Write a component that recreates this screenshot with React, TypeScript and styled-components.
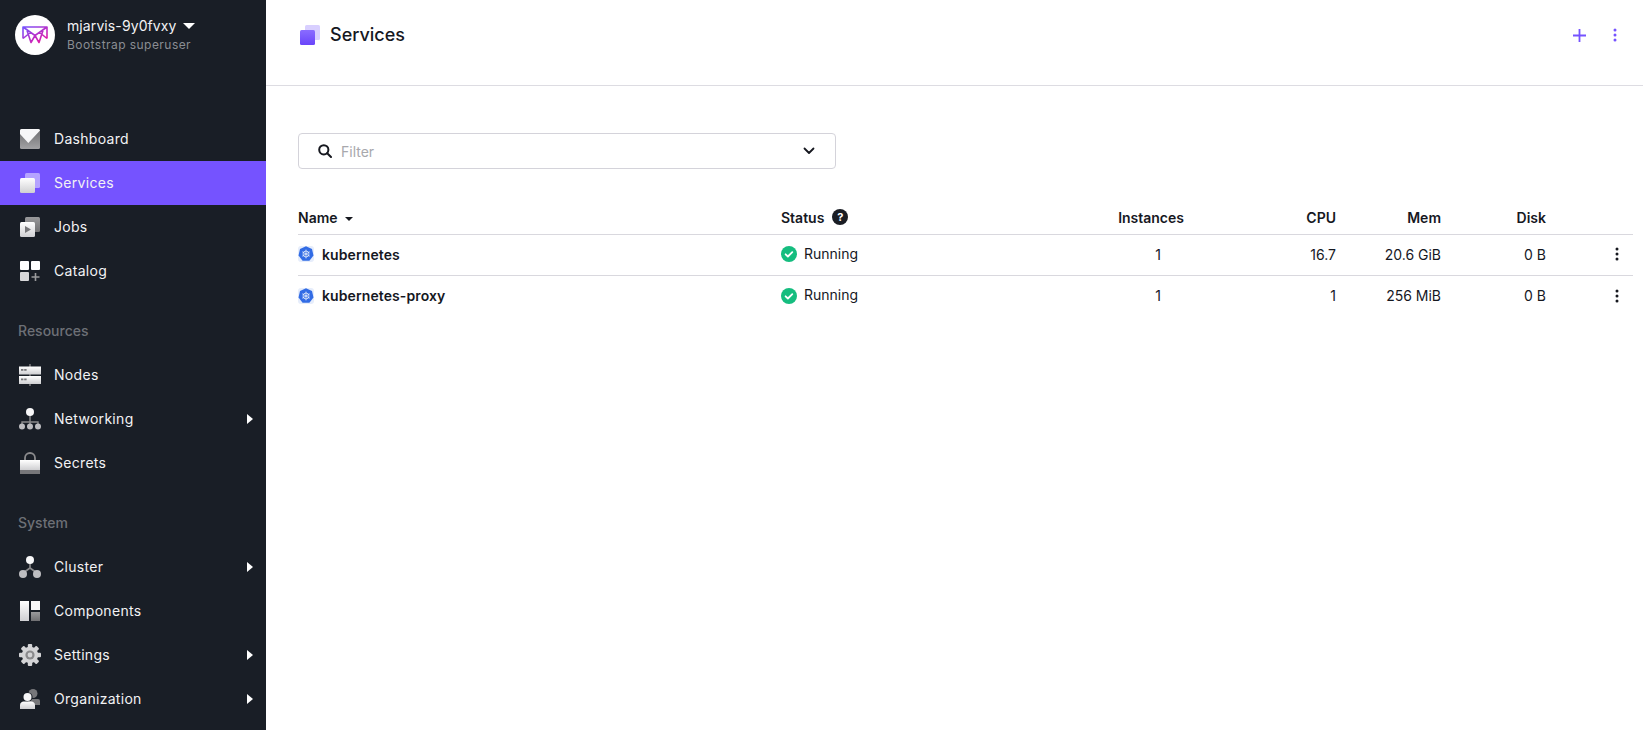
import { ReactNode } from "react";
import styled, { createGlobalStyle } from "styled-components";

const GlobalStyle = createGlobalStyle`
  html, body {
    margin: 0;
    height: 100%;
    background: #fff;
    font-family: Inter, "Liberation Sans", sans-serif;
    color: #16181f;
  }
  * { box-sizing: border-box; }
`;

const Page = styled.div`
  display: flex;
  height: 730px;
  overflow: hidden;
`;

const Sidebar = styled.aside`
  width: 266px;
  flex: none;
  background: #191e26;
  color: #f2f2f4;
`;

const Account = styled.div`
  display: flex;
  gap: 12px;
  padding: 15px 15px 0;
  height: 117px;
  align-items: flex-start;
`;

const Avatar = styled.div`
  width: 40px;
  height: 40px;
  border-radius: 50%;
  background: #fff;
  display: flex;
  align-items: center;
  justify-content: center;
`;

const AccountText = styled.div`
  padding-top: 2px;
`;

const AccountName = styled.div`
  display: flex;
  align-items: center;
  gap: 6px;
  font-size: 14px;
  line-height: 18px;
  letter-spacing: 0.1px;
`;

const AccountRole = styled.div`
  margin-top: 1px;
  font-size: 12px;
  line-height: 18px;
  letter-spacing: 0.45px;
  color: #8a8d93;
`;

const Caret = styled.span<{ $color?: string; $size?: number }>`
  display: inline-block;
  width: 0;
  height: 0;
  border-left: ${(p) => p.$size ?? 6}px solid transparent;
  border-right: ${(p) => p.$size ?? 6}px solid transparent;
  border-top: ${(p) => p.$size ?? 6}px solid ${(p) => p.$color ?? "#fff"};
`;

const NameCaret = styled(Caret)`
  margin-top: 3px;
`;

const NavGroup = styled.nav`
  margin-bottom: 16px;
`;

const NavTitle = styled.div`
  height: 44px;
  padding: 0 18px 2px;
  display: flex;
  align-items: center;
  font-size: 14px;
  font-weight: 500;
  color: #6d7076;
`;

const NavItem = styled.div<{ $active?: boolean }>`
  display: flex;
  align-items: center;
  height: 44px;
  padding: 0 11px 0 19px;
  font-size: 14px;
  letter-spacing: 0.3px;
  background: ${(p) => (p.$active ? "#7553ff" : "transparent")};
`;

const NavIcon = styled.span`
  width: 22px;
  height: 22px;
  margin-right: 13px;
  display: flex;
  align-items: center;
  justify-content: center;
`;

const NavLabel = styled.span`
  flex: 1;
  margin-top: -2px;
`;

const ChevronRight = styled.span`
  width: 0;
  height: 0;
  margin-right: 2px;
  border-top: 5px solid transparent;
  border-bottom: 5px solid transparent;
  border-left: 6px solid #fff;
`;

const Main = styled.main`
  flex: 1;
  min-width: 0;
`;

const TopBar = styled.header`
  height: 86px;
  border-bottom: 1px solid #dddce2;
  display: flex;
  align-items: flex-start;
  padding: 25px 26px 0 34px;
`;

const PageTitle = styled.h1`
  flex: 1;
  display: flex;
  align-items: center;
  gap: 10px;
  margin: 0;
  font-size: 18px;
  line-height: 20px;
  font-weight: 500;
  color: #16181f;
`;

const TopActions = styled.div`
  display: flex;
  align-items: center;
  gap: 27px;
  margin-top: 3px;
`;

const Content = styled.div`
  padding: 47px 10px 0 32px;
`;

const Filter = styled.div`
  width: 538px;
  height: 36px;
  border: 1px solid #d4d3da;
  border-radius: 4px;
  display: flex;
  align-items: center;
  padding: 0 20px 0 19px;
  font-size: 14px;
  color: #a8a8ad;
  gap: 9px;
`;

const FilterText = styled.span`
  flex: 1;
`;

const Table = styled.div`
  margin-top: 38px;
`;

const columns = "483px 270px 133px 152px 105px 105px 1fr";

const HeadRow = styled.div`
  display: grid;
  grid-template-columns: ${columns};
  align-items: center;
  border-bottom: 1px solid #d9d8de;
  padding-bottom: 7px;
  height: 28px;
  font-size: 14px;
  font-weight: 600;
  color: #16181f;
`;

const Row = styled.div`
  display: grid;
  grid-template-columns: ${columns};
  height: 41px;
  padding-bottom: 2px;
  align-items: center;
  border-bottom: 1px solid #d9d8de;
  font-size: 14px;
  color: #16181f;

  &:last-child {
    border-bottom: none;
  }
`;

const Cell = styled.div<{ $right?: boolean; $pad?: number }>`
  display: flex;
  align-items: center;
  justify-content: ${(p) => (p.$right ? "flex-end" : "flex-start")};
  padding-right: ${(p) => p.$pad ?? 0}px;
`;

const HeadCell = styled(Cell)`
  gap: 7px;
`;

const NameCell = styled(Cell)`
  gap: 8px;
  font-weight: 600;
  letter-spacing: 0.1px;
`;

const StatusCell = styled(Cell)`
  gap: 7px;
`;

const StatusText = styled.span`
  margin-top: -2px;
`;

const Help = styled.span`
  width: 16px;
  height: 16px;
  margin-left: 1px;
  border-radius: 50%;
  background: #1a1d24;
  color: #fff;
  font-size: 11px;
  font-weight: 700;
  display: flex;
  align-items: center;
  justify-content: center;
`;

const DotsCell = styled(Cell)`
  justify-content: flex-end;
  padding-right: 14px;
`;

const Dots = ({ color }: { color: string }) => (
  <svg width="4" height="14" viewBox="0 0 4 14" fill={color}>
    <circle cx="2" cy="2" r="1.5" />
    <circle cx="2" cy="7" r="1.5" />
    <circle cx="2" cy="12" r="1.5" />
  </svg>
);

const Gradients = () => (
  <svg width="0" height="0" style={{ position: "absolute" }}>
    <defs>
      <linearGradient id="fade" x1="0" y1="0" x2="0" y2="1">
        <stop offset="0" stopColor="#ffffff" />
        <stop offset="1" stopColor="#cfcfd2" />
      </linearGradient>
      <linearGradient id="grey" x1="0" y1="0" x2="0" y2="1">
        <stop offset="0" stopColor="#9a9a9c" />
        <stop offset="1" stopColor="#707072" />
      </linearGradient>
      <linearGradient id="greyUp" x1="0" y1="0" x2="0" y2="1">
        <stop offset="0" stopColor="#6c6c6e" />
        <stop offset="1" stopColor="#a2a2a4" />
      </linearGradient>
      <linearGradient id="logo" x1="0" y1="0" x2="1" y2="1">
        <stop offset="0" stopColor="#7553ff" />
        <stop offset="1" stopColor="#f0129b" />
      </linearGradient>
      <linearGradient id="purple" x1="0" y1="0" x2="0" y2="1">
        <stop offset="0" stopColor="#8a6cff" />
        <stop offset="1" stopColor="#6a45fa" />
      </linearGradient>
    </defs>
  </svg>
);

const Logo = () => (
  <svg width="26" height="18" viewBox="0 0 26 18" fill="none" stroke="url(#logo)" strokeWidth="1.6" strokeLinejoin="round">
    <path d="M1 12.500V1h24v11.500M1 1l12 8.500L25 1M1 12.500L9 6M25 12.500L17 6M4.500 3L9 16.500 13 9.500l4 7L21.500 3" />
  </svg>
);

const DashboardIcon = () => (
  <svg width="20" height="20" viewBox="0 0 20 20">
    <rect width="20" height="20" rx="1.5" fill="url(#greyUp)" />
    <path d="M1.500 0h17A1.500 1.500 0 0 1 20 1.500L8.300 14 0 5V1.500A1.500 1.500 0 0 1 1.500 0z" fill="#f7f7f8" />
  </svg>
);

const StackIcon = ({ front, back }: { front: string; back: string }) => (
  <svg width="20" height="20" viewBox="0 0 20 20">
    <rect x="5" width="15" height="15" rx="1.5" fill={back} />
    <rect y="5" width="15" height="15" rx="1.5" fill={front} />
  </svg>
);

const JobsIcon = () => (
  <svg width="20" height="20" viewBox="0 0 20 20">
    <rect x="5" width="15" height="15" rx="1.5" fill="url(#grey)" />
    <rect y="5" width="15" height="15" rx="1.5" fill="url(#fade)" />
    <path d="M5 9l6 3.500L5 16z" fill="#77777a" />
  </svg>
);

const CatalogIcon = () => (
  <svg width="20" height="20" viewBox="0 0 20 20">
    <rect width="9" height="9" rx="1" fill="#fff" />
    <rect x="11" width="9" height="9" rx="1" fill="#fff" />
    <rect y="11" width="9" height="9" rx="1" fill="#d8d8da" />
    <path d="M15.500 12v8M11.500 16h8" stroke="#9a9a9c" strokeWidth="1.6" />
  </svg>
);

const NodesIcon = () => (
  <svg width="22" height="22" viewBox="0 0 22 22">
    <path d="M11 0v22" stroke="#77777a" strokeWidth="1.6" />
    <rect y="2.500" width="22" height="8" fill="url(#fade)" />
    <rect y="12" width="22" height="8" fill="url(#fade)" />
    <rect x="2" y="5" width="2.400" height="1.800" fill="#77777a" />
    <rect x="5.200" y="5" width="2.400" height="1.800" fill="#77777a" />
    <rect x="2" y="14.500" width="2.400" height="1.800" fill="#77777a" />
    <rect x="5.200" y="14.500" width="2.400" height="1.800" fill="#77777a" />
  </svg>
);

const NetworkIcon = () => (
  <svg width="22" height="22" viewBox="0 0 22 22">
    <path d="M11 7v12M3 19v-5h16v5" fill="none" stroke="#8a8a8c" strokeWidth="1.4" />
    <circle cx="11" cy="4" r="4" fill="#f7f7f8" />
    <circle cx="3" cy="18.500" r="3" fill="#bdbdc0" />
    <circle cx="11" cy="18.500" r="3" fill="#bdbdc0" />
    <circle cx="19" cy="18.500" r="3" fill="#bdbdc0" />
  </svg>
);

const SecretsIcon = () => (
  <svg width="20" height="22" viewBox="0 0 20 22">
    <path d="M5 9V6a5 5 0 0 1 10 0v3" fill="none" stroke="#8a8a8c" strokeWidth="1.8" />
    <rect y="8" width="20" height="10" fill="url(#fade)" />
    <rect y="18" width="20" height="4" fill="#77777a" />
  </svg>
);

const ClusterIcon = () => (
  <svg width="22" height="22" viewBox="0 0 22 22">
    <path d="M11 5v7M11 12l-7 5M11 12l7 5" stroke="#8a8a8c" strokeWidth="1.6" />
    <circle cx="11" cy="4" r="4" fill="#f7f7f8" />
    <circle cx="4" cy="18" r="4" fill="#bdbdc0" />
    <circle cx="18" cy="18" r="4" fill="#bdbdc0" />
  </svg>
);

const ComponentsIcon = () => (
  <svg width="20" height="20" viewBox="0 0 20 20">
    <rect width="9" height="20" fill="url(#fade)" />
    <rect x="11" width="9" height="9" fill="#f7f7f8" />
    <rect x="11" y="11" width="9" height="9" fill="url(#grey)" />
  </svg>
);

const SettingsIcon = () => (
  <svg width="22" height="22" viewBox="0 0 22 22">
    <g fill="#d4d4d6">
      <circle cx="11" cy="11" r="8.200" />
      {[0, 45, 90, 135, 180, 225, 270, 315].map((a) => (
        <rect key={a} x="8.800" y="0" width="4.400" height="5" rx="1" transform={`rotate(${a} 11 11)`} />
      ))}
    </g>
    <circle cx="11" cy="11" r="4.600" fill="#8a8a8c" />
    <circle cx="11" cy="11" r="2.400" fill="#d4d4d6" />
  </svg>
);

const OrganizationIcon = () => (
  <svg width="20" height="20" viewBox="0 0 20 20">
    <circle cx="13" cy="4.500" r="4.500" fill="#77777a" />
    <path d="M8 10h10a2 2 0 0 1 2 2v4H8z" fill="#77777a" />
    <circle cx="8" cy="8" r="4.600" fill="#191e26" />
    <circle cx="7.500" cy="8" r="4" fill="#f7f7f8" />
    <path d="M0 20v-4c0-2 2-3.500 3.500-3.500h8C13 12.500 15 14 15 16v4z" fill="url(#fade)" />
  </svg>
);

const SearchIcon = () => (
  <svg width="14" height="14" viewBox="0 0 14 14" fill="none" stroke="#16181f" strokeWidth="2">
    <circle cx="5.800" cy="5.800" r="4.600" />
    <path d="M9.200 9.200L13 13" strokeLinecap="round" />
  </svg>
);

const ChevronDown = () => (
  <svg width="12" height="8" viewBox="0 0 12 8" fill="none" stroke="#16181f" strokeWidth="1.800">
    <path d="M1.500 1.500L6 6l4.500-4.500" strokeLinecap="round" strokeLinejoin="round" />
  </svg>
);

const PlusIcon = () => (
  <svg width="13" height="13" viewBox="0 0 13 13" stroke="#7553ff" strokeWidth="1.800">
    <path d="M6.500 0v13M0 6.500h13" />
  </svg>
);

const KubeIcon = () => (
  <svg width="16" height="16" viewBox="0 0 16 16">
    <rect width="16" height="16" rx="3" fill="#e6edfb" />
    <path d="M8 .2l6 2.900 1.500 6.500-4.100 5.200H4.600L.5 9.600 2 3.100z" fill="#326ce5" />
    <g stroke="#e6edfb" strokeWidth="0.8" fill="none">
      <circle cx="8" cy="8" r="3" />
      <path d="M8 3.600v8.800M4.200 5.800l7.600 4.400M11.800 5.800l-7.600 4.400" />
    </g>
  </svg>
);

const CheckIcon = () => (
  <svg width="16" height="16" viewBox="0 0 16 16">
    <circle cx="8" cy="8" r="8" fill="#15bd7f" />
    <path d="M4.600 8.300l2.300 2.200 4.400-4.400" fill="none" stroke="#fff" strokeWidth="1.800" strokeLinecap="round" strokeLinejoin="round" />
  </svg>
);

type NavEntry = { label: string; icon: ReactNode; active?: boolean; more?: boolean };

const groups: { title?: string; items: NavEntry[] }[] = [
  {
    items: [
      { label: "Dashboard", icon: <DashboardIcon /> },
      { label: "Services", icon: <StackIcon front="url(#fade)" back="#b5a3ff" />, active: true },
      { label: "Jobs", icon: <JobsIcon /> },
      { label: "Catalog", icon: <CatalogIcon /> },
    ],
  },
  {
    title: "Resources",
    items: [
      { label: "Nodes", icon: <NodesIcon /> },
      { label: "Networking", icon: <NetworkIcon />, more: true },
      { label: "Secrets", icon: <SecretsIcon /> },
    ],
  },
  {
    title: "System",
    items: [
      { label: "Cluster", icon: <ClusterIcon />, more: true },
      { label: "Components", icon: <ComponentsIcon /> },
      { label: "Settings", icon: <SettingsIcon />, more: true },
      { label: "Organization", icon: <OrganizationIcon />, more: true },
    ],
  },
];

const services = [
  { name: "kubernetes", cpu: "16.7", mem: "20.6 GiB" },
  { name: "kubernetes-proxy", cpu: "1", mem: "256 MiB" },
];

export default function App() {
  return (
    <Page>
      <GlobalStyle />
      <Gradients />
      <Sidebar>
        <Account>
          <Avatar>
            <Logo />
          </Avatar>
          <AccountText>
            <AccountName>
              mjarvis-9y0fvxy <Caret />
            </AccountName>
            <AccountRole>Bootstrap superuser</AccountRole>
          </AccountText>
        </Account>
        {groups.map((group) => (
          <NavGroup key={group.title ?? "main"}>
            {group.title && <NavTitle>{group.title}</NavTitle>}
            {group.items.map((item) => (
              <NavItem key={item.label} $active={item.active}>
                <NavIcon>{item.icon}</NavIcon>
                <NavLabel>{item.label}</NavLabel>
                {item.more && <ChevronRight />}
              </NavItem>
            ))}
          </NavGroup>
        ))}
      </Sidebar>
      <Main>
        <TopBar>
          <PageTitle>
            <StackIcon front="url(#purple)" back="#d8cfff" />
            Services
          </PageTitle>
          <TopActions>
            <PlusIcon />
            <Dots color="#7553ff" />
          </TopActions>
        </TopBar>
        <Content>
          <Filter>
            <SearchIcon />
            <FilterText>Filter</FilterText>
            <ChevronDown />
          </Filter>
          <Table>
            <HeadRow>
              <HeadCell>
                Name <NameCaret $color="#16181f" $size={4} />
              </HeadCell>
              <HeadCell>
                Status <Help>?</Help>
              </HeadCell>
              <HeadCell $right>Instances</HeadCell>
              <HeadCell $right>CPU</HeadCell>
              <HeadCell $right>Mem</HeadCell>
              <HeadCell $right>Disk</HeadCell>
              <div />
            </HeadRow>
            {services.map((s) => (
              <Row key={s.name}>
                <NameCell>
                  <KubeIcon />
                  {s.name}
                </NameCell>
                <StatusCell>
                  <CheckIcon />
                  <StatusText>Running</StatusText>
                </StatusCell>
                <Cell $right $pad={23}>1</Cell>
                <Cell $right>{s.cpu}</Cell>
                <Cell $right>{s.mem}</Cell>
                <Cell $right>0 B</Cell>
                <DotsCell>
                  <Dots color="#16181f" />
                </DotsCell>
              </Row>
            ))}
          </Table>
        </Content>
      </Main>
    </Page>
  );
}
